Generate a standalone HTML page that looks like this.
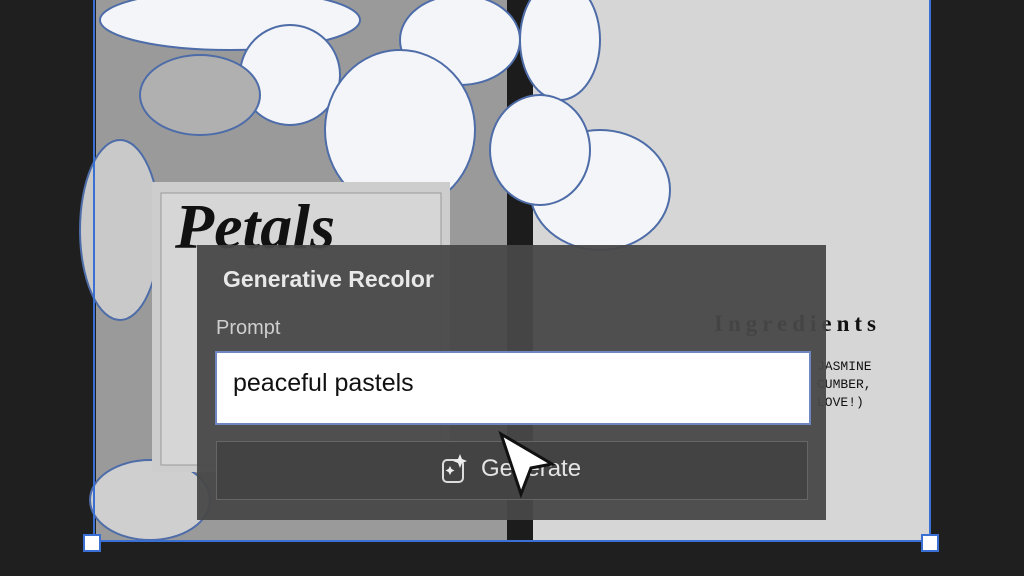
<!DOCTYPE html>
<html><head><meta charset="utf-8"><style>
body{margin:0;width:1024px;height:576px;background:#1f1f1f;overflow:hidden;position:relative;font-family:"Liberation Sans",sans-serif}
.a{position:absolute}
</style></head><body>
<div class="a" style="left:96px;top:0;width:412px;height:541px;background:#9a9a9a"></div>
<div class="a" style="left:533px;top:0;width:396px;height:541px;background:#d6d6d6"></div>
<div class="a" style="left:507px;top:0;width:26px;height:541px;background:#1c1c1c"></div>
<svg class="a" style="left:0;top:0" width="1024" height="576">
<g fill="#f4f5f8" stroke="#4d6ca8" stroke-width="2">
<ellipse cx="230" cy="20" rx="130" ry="30"/>
<ellipse cx="290" cy="75" rx="50" ry="50"/>
<ellipse cx="200" cy="95" rx="60" ry="40" fill="#b0b0b0"/>
<ellipse cx="120" cy="230" rx="40" ry="90" fill="#c9c9c9"/>
<ellipse cx="460" cy="40" rx="60" ry="45"/>
<ellipse cx="400" cy="130" rx="75" ry="80"/>
<ellipse cx="560" cy="40" rx="40" ry="60"/>
<ellipse cx="600" cy="190" rx="70" ry="60"/>
<ellipse cx="540" cy="150" rx="50" ry="55"/>
<ellipse cx="150" cy="500" rx="60" ry="40" fill="#cfcfcf"/>
</g>
<rect x="152" y="182" width="298" height="290" fill="#cdcdcd"/>
<rect x="161" y="193" width="280" height="272" fill="#d6d6d6" stroke="#999"/>
<text x="175" y="248" font-family="Liberation Serif" font-style="italic" font-weight="bold" font-size="64" fill="#111">Petals</text>
<text x="714" y="331" font-family="Liberation Serif" font-weight="bold" font-size="23" fill="#111" textLength="162">Ingredients</text>
<text x="817" y="370" font-family="Liberation Mono" font-size="13" fill="#111">JASMINE</text>
<text x="817" y="388" font-family="Liberation Mono" font-size="13" fill="#111">CUMBER,</text>
<text x="817" y="406" font-family="Liberation Mono" font-size="13" fill="#111"> LOVE!)</text>
<rect x="94" y="-2" width="836" height="543" fill="none" stroke="#3a6fd4" stroke-width="2"/>
<rect x="84" y="535" width="16" height="16" fill="#fff" stroke="#3a6fd4" stroke-width="2"/>
<rect x="922" y="535" width="16" height="16" fill="#fff" stroke="#3a6fd4" stroke-width="2"/>
</svg>
<div class="a" style="left:197px;top:245px;width:629px;height:275px;background:rgba(72,72,72,0.95)"></div>
<div class="a" style="left:223px;top:266px;color:#e8e8e8;font-size:23px;font-weight:bold">Generative Recolor</div>
<div class="a" style="left:216px;top:317px;color:#cfcfcf;font-size:20px">Prompt</div>
<div class="a" style="left:215px;top:351px;width:592px;height:70px;background:#fff;border:2px solid #6e86c2;box-sizing:content-box"></div>
<div class="a" style="left:233px;top:369px;color:#111;font-size:25px">peaceful pastels</div>
<div class="a" style="left:216px;top:441px;width:592px;height:59px;background:#434343;border:1px solid #666;box-sizing:border-box"></div>
<svg class="a" style="left:440px;top:452px" width="30" height="34"><rect x="3" y="8" width="20" height="22" rx="4" fill="none" stroke="#ddd" stroke-width="2"/><path d="M20 2l2 5 5 2-5 2-2 5-2-5-5-2 5-2z M10 14l1.5 3 3 1.5-3 1.5-1.5 3-1.5-3-3-1.5 3-1.5z" fill="#eee"/></svg>
<div class="a" style="left:481px;top:455px;color:#e4e4e4;font-size:24px">Generate</div>
<svg class="a" style="left:495px;top:430px" width="70" height="70"><path d="M6 4 L57 34 L36 38 L26 64 Z" fill="#fff" stroke="#111" stroke-width="3"/></svg>
</body></html>
